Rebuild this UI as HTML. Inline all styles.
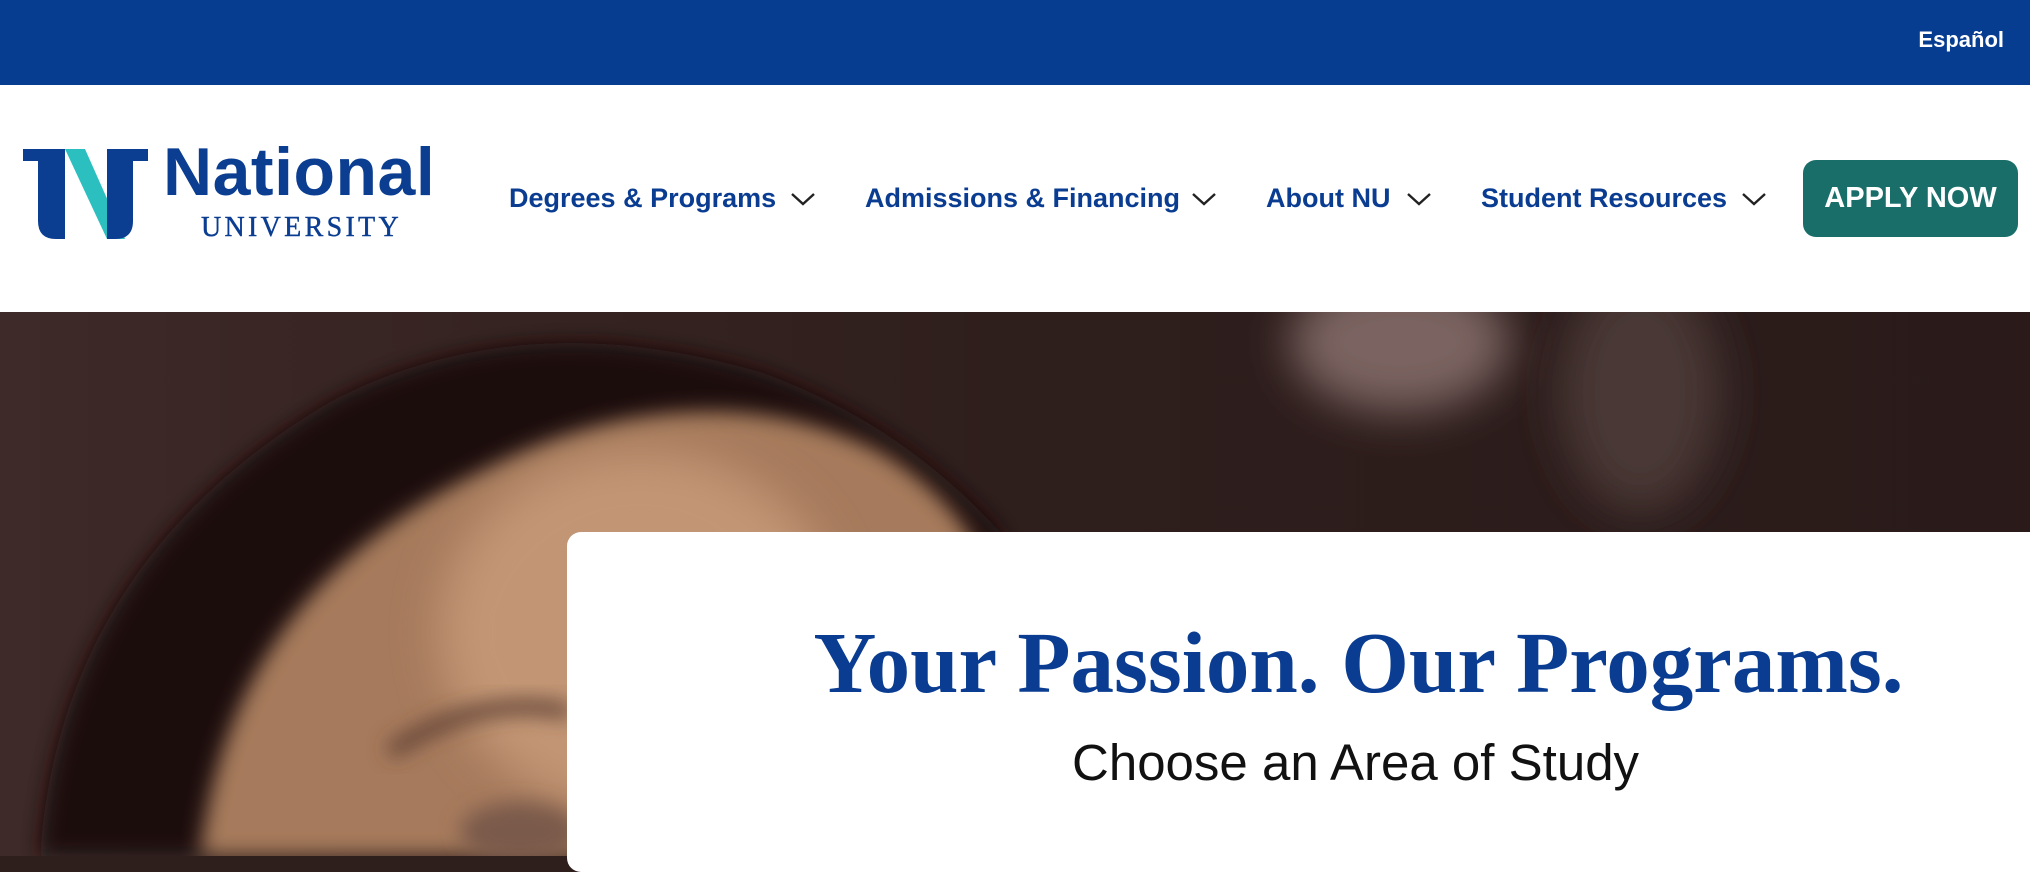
<!DOCTYPE html>
<html><head><meta charset="utf-8"><style>
*{margin:0;padding:0;box-sizing:border-box}
body{width:2030px;height:856px;overflow:hidden;background:#2e1e1c;font-family:"Liberation Sans",Arial,sans-serif;position:relative}
.hdr{position:absolute;left:0;top:0;width:2030px;height:312px;background:#fff}
.top{position:absolute;left:0;top:0;width:2030px;height:85px;background:#073d91}
.esp{position:absolute;right:26px;top:27px;color:#fff;font-weight:bold;font-size:22px}
.nav{position:absolute;top:183px;font-size:27px;font-weight:bold;color:#0a3d91;white-space:nowrap}
.chev{position:absolute;top:191px}
.btn{position:absolute;left:1803px;top:160px;width:215px;height:77px;background:#1a6e69;border-radius:13px;color:#fff;font-weight:bold;font-size:29px;text-align:center;line-height:77px}
.hero{position:absolute;left:0;top:312px;width:2030px;height:544px}
.card{position:absolute;left:567px;top:532px;width:1480px;height:340px;background:#fff;border-radius:14px}
.h1{position:absolute;left:567px;width:1463px;top:612px;text-align:center;padding-left:120px;font-family:"Liberation Serif",serif;font-weight:bold;font-size:87px;color:#0a3d91;white-space:nowrap}
.h2{position:absolute;left:1072px;top:733px;font-size:51px;color:#111;white-space:nowrap}
</style></head><body>
<div class="hdr"></div>
<div class="top"><div class="esp">Español</div></div>

<svg style="position:absolute;left:23px;top:149px" width="128" height="90" viewBox="0 0 128 90">
<path d="M42 0H62L102 90H84Z" fill="#2cbfc0"/>
<path d="M0 0H42V90H33Q15 90 15 72V12H0Z" fill="#0b3d91"/>
<path d="M84 0H125V12H110V72Q110 90 92 90H84Z" fill="#0b3d91"/>
</svg>
<div style="position:absolute;left:163px;top:133px;font-size:68px;font-weight:bold;color:#0b3d91;letter-spacing:0.5px">National</div>
<div style="position:absolute;left:201px;top:212px;font-family:'Liberation Serif',serif;font-size:28px;color:#0b3d91;letter-spacing:3.3px;-webkit-text-stroke:0.4px #0b3d91">UNIVERSITY</div>

<div class="nav" style="left:509px">Degrees &amp; Programs</div>
<div class="nav" style="left:865px">Admissions &amp; Financing</div>
<div class="nav" style="left:1266px">About NU</div>
<div class="nav" style="left:1481px">Student Resources</div>
<svg class="chev" style="left:790px" width="26" height="16"><path d="M2 3L13 13L24 3" stroke="#222" stroke-width="2.4" fill="none"/></svg>
<svg class="chev" style="left:1191px" width="26" height="16"><path d="M2 3L13 13L24 3" stroke="#222" stroke-width="2.4" fill="none"/></svg>
<svg class="chev" style="left:1406px" width="26" height="16"><path d="M2 3L13 13L24 3" stroke="#222" stroke-width="2.4" fill="none"/></svg>
<svg class="chev" style="left:1741px" width="26" height="16"><path d="M2 3L13 13L24 3" stroke="#222" stroke-width="2.4" fill="none"/></svg>
<div class="btn">APPLY NOW</div>

<svg class="hero" width="2030" height="544" viewBox="0 0 2030 544">
<defs>
<filter id="b" x="-50%" y="-50%" width="200%" height="200%"><feGaussianBlur stdDeviation="22"/></filter>
<filter id="b2" x="-50%" y="-50%" width="200%" height="200%"><feGaussianBlur stdDeviation="10"/></filter>
<linearGradient id="bg" x1="0" y1="0" x2="1" y2="0"><stop offset="0" stop-color="#3e2a28"/><stop offset="0.5" stop-color="#2e1e1c"/><stop offset="1" stop-color="#2a1b1a"/></linearGradient>
</defs>
<rect width="2030" height="544" fill="url(#bg)"/>
<ellipse cx="1400" cy="30" rx="110" ry="70" fill="#7a6461" filter="url(#b)"/>
<ellipse cx="1640" cy="80" rx="80" ry="120" fill="#4a3836" filter="url(#b)"/>
<path d="M40 544 Q60 250 330 90 Q520 -10 760 60 Q900 110 1000 220 L1000 544Z" fill="#1c1110" filter="url(#b2)"/>
<path d="M200 544 Q230 280 480 160 Q700 50 880 140 Q980 200 1000 300 L1000 544Z" fill="#a67a5c" filter="url(#b2)"/>
<ellipse cx="640" cy="320" rx="200" ry="180" fill="#c29674" filter="url(#b)"/>
<path d="M390 440 Q480 380 570 400" stroke="#5c3e30" stroke-width="14" fill="none" filter="url(#b2)"/>
<ellipse cx="520" cy="520" rx="60" ry="30" fill="#7a5a4c" filter="url(#b2)"/>
</svg>

<div class="card"></div>
<div class="h1">Your Passion. Our Programs.</div>
<div class="h2">Choose an Area of Study</div>
</body></html>
